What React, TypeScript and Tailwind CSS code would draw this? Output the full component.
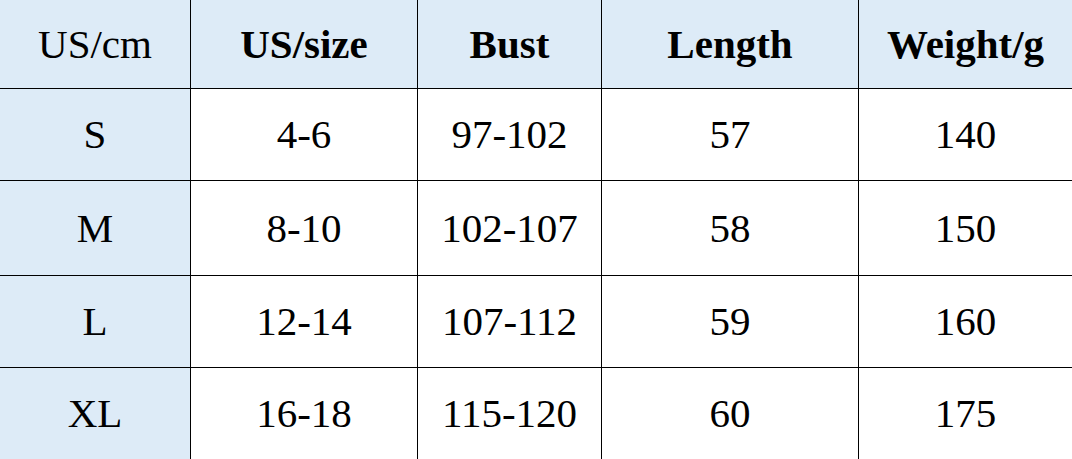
import React from "react";

const header = ["US/cm", "US/size", "Bust", "Length", "Weight/g"];
const rows = [
  ["S", "4-6", "97-102", "57", "140"],
  ["M", "8-10", "102-107", "58", "150"],
  ["L", "12-14", "107-112", "59", "160"],
  ["XL", "16-18", "115-120", "60", "175"],
];

export default function App() {
  return (
    <div
      className="w-[1072px] h-[459px] bg-white text-black overflow-hidden"
      style={{ fontFamily: '"Liberation Serif", "Times New Roman", serif' }}
    >
      <div className="grid grid-cols-[191px_227px_184px_257px_213px] grid-rows-[89px_92px_95px_92px_91px] text-[41px] leading-none">
        {header.map((h, i) => (
          <div
            key={h}
            className={
              "flex items-center justify-center bg-[#ddebf7] border-b border-black " +
              (i < 4 ? "border-r " : "") +
              (i === 0 ? "font-normal" : "font-bold")
            }
          >
            {h}
          </div>
        ))}
        {rows.map((r, ri) =>
          r.map((c, ci) => (
            <div
              key={ri + "-" + ci}
              className={
                "flex items-center justify-center border-black " +
                (ri < 3 ? "border-b " : "") +
                (ci < 4 ? "border-r " : "") +
                (ci === 0 ? "bg-[#ddebf7]" : "bg-white")
              }
            >
              {c}
            </div>
          ))
        )}
      </div>
    </div>
  );
}
